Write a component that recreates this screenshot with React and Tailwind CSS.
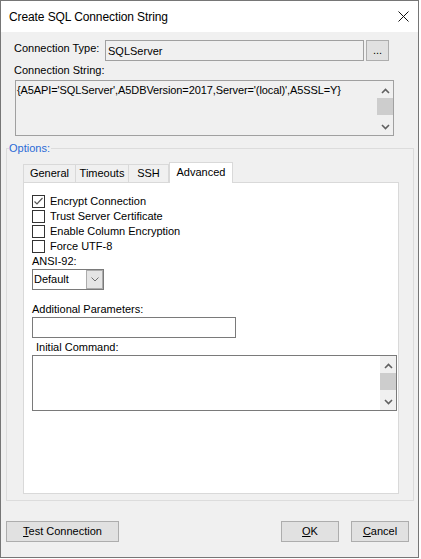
import React from 'react';

// Classic Win32 scrollbar: arrow, thumb, track, arrow
const Scrollbar = () => (
  <div className="w-[16px] h-full bg-[#f0f0f0] flex flex-col shrink-0">
    <div className="h-[17px] flex items-center justify-center pt-[2px]">
      <svg width="9" height="6" viewBox="0 0 9 6">
        <path d="M1 5 L4.5 1.5 L8 5" stroke="#606060" strokeWidth="1.6" fill="none" />
      </svg>
    </div>
    <div className="h-[17px] bg-[#cdcdcd]" />
    <div className="flex-1" />
    <div className="h-[17px] flex items-center justify-center">
      <svg width="9" height="6" viewBox="0 0 9 6">
        <path d="M1 1 L4.5 4.5 L8 1" stroke="#606060" strokeWidth="1.6" fill="none" />
      </svg>
    </div>
  </div>
);

const Checkbox = ({ checked, label }) => (
  <div className="h-[15px] flex items-center">
    <div className="w-[13px] h-[13px] border border-[#333333] bg-white flex items-center justify-center">
      {checked && (
        <svg width="11" height="11" viewBox="0 0 11 11">
          <path d="M1.5 5.5 L4 8 L9.5 2" stroke="#555555" strokeWidth="1.2" fill="none" />
        </svg>
      )}
    </div>
    <span className="ml-[5px]">{label}</span>
  </div>
);

const Button = ({ className, children }) => (
  <div className={`h-[21px] bg-[#e1e1e1] border border-[#adadad] flex items-center justify-center ${className}`}>
    {children}
  </div>
);

export default function App() {
  const tabs = [
    { name: 'General', w: 'w-[52px]' },
    { name: 'Timeouts', w: 'w-[53px]' },
  ];

  return (
    <div className="w-[421px] h-[559px] bg-white font-['Liberation_Sans',Arial,sans-serif] text-[11px] leading-[13px] text-black">
      <div className="w-[419px] h-[558px] border border-[#767676] flex flex-col">
        {/* title bar */}
        <div className="h-[31px] bg-white flex items-center justify-between pl-[8px] pr-[9px] shrink-0">
          <span className="text-[12px] leading-[15px] pt-[2px] tracking-[-0.1px]">Create SQL Connection String</span>
          <svg width="11" height="11" viewBox="0 0 11 11">
            <path d="M0.5 0.5 L10.5 10.5 M10.5 0.5 L0.5 10.5" stroke="#111111" strokeWidth="1" />
          </svg>
        </div>

        <div className="flex-1 bg-[#f0f0f0] flex flex-col">
          {/* connection type */}
          <div className="mt-[8px] h-[21px] flex pl-[13px]">
            <span className="w-[91px] pt-[2px]">Connection Type:</span>
            <div className="w-[259px] h-[21px] border border-[#a0a0a0] bg-[#f0f0f0] flex items-center pl-[2px] pt-[1px]">
              SQLServer
            </div>
            <Button className="ml-[2px] w-[23px]">
              <span className="pb-[1px]">...</span>
            </Button>
          </div>

          {/* connection string */}
          <span className="mt-[3px] ml-[13px]">Connection String:</span>
          <div className="mt-[3px] ml-[14px] w-[379px] h-[56px] border border-[#a0a0a0] bg-[#f0f0f0] flex">
            <div className="flex-1 pl-[1px] pt-[3px] whitespace-nowrap tracking-[-0.1px]">
              {"{A5API='SQLServer',A5DBVersion=2017,Server='(local)',A5SSL=Y}"}
            </div>
            <Scrollbar />
          </div>

          {/* options group */}
          <fieldset className="mt-[6px] ml-[5px] w-[408px] border border-[#dcdcdc] pb-[6px]">
            <legend className="ml-[2px] pr-[1px] text-[#2a6ad6]">Options:</legend>
            <div className="mt-[7px] ml-[16px] flex items-end h-[20px]">
              {tabs.map(t => (
                <div key={t.name} className={`${t.w} h-[18px] border-l border-t border-[#d9d9d9] flex items-center justify-center`}>
                  {t.name}
                </div>
              ))}
              <div className="w-[41px] h-[18px] border-l border-t border-r border-[#d9d9d9] flex items-center justify-center">
                SSH
              </div>
              <div className="relative z-10 -mb-px w-[64px] h-[21px] bg-white border-l border-t border-r border-[#d9d9d9] flex items-center justify-center pb-[1px]">
                Advanced
              </div>
            </div>

            <div className="ml-[16px] w-[376px] h-[312px] bg-white border border-[#d9d9d9] flex flex-col pl-[8px] pt-[11px]">
              <Checkbox checked label="Encrypt Connection" />
              <Checkbox label="Trust Server Certificate" />
              <Checkbox label="Enable Column Encryption" />
              <Checkbox label="Force UTF-8" />

              <span className="mt-[1px]">ANSI-92:</span>
              <div className="mt-[1px] w-[72px] h-[21px] border border-[#7a7a7a] bg-white flex">
                <div className="flex-1 flex items-center pl-[1px]">Default</div>
                <div className="w-[17px] h-full bg-[#e5e5e5] border border-[#acacac] flex items-center justify-center">
                  <svg width="8" height="5" viewBox="0 0 8 5">
                    <path d="M0.5 0.5 L4 4 L7.5 0.5" stroke="#707070" strokeWidth="1" fill="none" />
                  </svg>
                </div>
              </div>

              <span className="mt-[13px]">Additional Parameters:</span>
              <div className="mt-[1px] w-[204px] h-[21px] border border-[#7a7a7a] bg-white" />

              <span className="mt-[3px] ml-[4px]">Initial Command:</span>
              <div className="mt-[1px] w-[365px] h-[56px] border border-[#7a7a7a] bg-white flex">
                <div className="flex-1" />
                <Scrollbar />
              </div>
            </div>
          </fieldset>

          {/* dialog buttons */}
          <div className="mt-[20px] flex ml-[5px] mr-[9px]">
            <Button className="w-[113px]">
              <span><u>T</u>est Connection</span>
            </Button>
            <Button className="ml-auto w-[58px]">
              <span><u>O</u>K</span>
            </Button>
            <Button className="ml-[12px] w-[58px]">
              <span><u>C</u>ancel</span>
            </Button>
          </div>
        </div>
      </div>
    </div>
  );
}
